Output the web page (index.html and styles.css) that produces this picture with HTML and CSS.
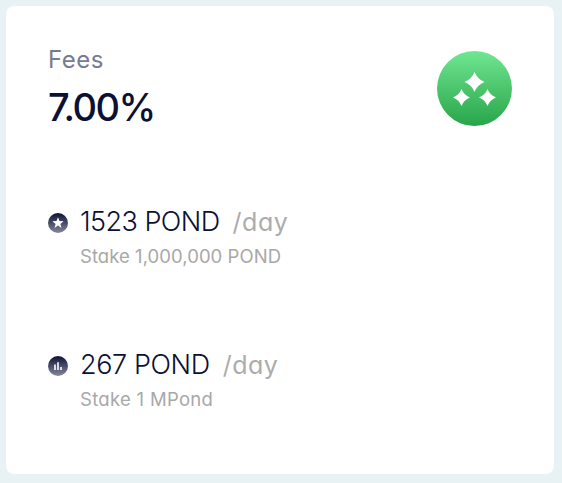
FILE: index.html
```html
<!doctype html>
<html lang="en">

    <head>
        <meta charset="UTF-8" />
        <title>Fees</title>
        <link rel="stylesheet" href="styles.css">
    </head>

    <body>
        <div class="card">
            <div class="header">
                <div class="fees">
                    <div class="label">Fees</div>
                    <div class="value">7.00%</div>
                </div>
                <svg class="badge" width="75" height="75" viewBox="0.5 0.5 75 75">
                    <defs>
                        <linearGradient id="green" x1="0" y1="0" x2="0" y2="1">
                            <stop offset="0" stop-color="#70e691" />
                            <stop offset="1" stop-color="#28a54a" />
                        </linearGradient>
                    </defs>
                    <circle cx="38" cy="38" r="37.5" fill="url(#green)" />
                    <g fill="#fff">
                        <path d="M38 21.5Q40.8 28.7 48 31.5Q40.8 34.3 38 41.5Q35.2 34.3 28 31.5Q35.2 28.7 38 21.5Z" />
                        <path d="M25 38.5Q27.4 44.7 33.5 47Q27.4 49.3 25 55.5Q22.6 49.3 16.5 47Q22.6 44.7 25 38.5Z" />
                        <path d="M51 38.5Q53.4 44.7 59.5 47Q53.4 49.3 51 55.5Q48.6 49.3 42.5 47Q48.6 44.7 51 38.5Z" />
                    </g>
                </svg>
            </div>
            <div class="reward">
                <svg class="icon" width="20" height="20" viewBox="0 0 20 20">
                    <defs>
                        <linearGradient id="navy" x1="0" y1="0" x2="0" y2="1">
                            <stop offset="0" stop-color="#0d1138" />
                            <stop offset="1" stop-color="#85889b" />
                        </linearGradient>
                    </defs>
                    <circle cx="10" cy="10" r="10" fill="url(#navy)" />
                    <path fill="#fff" d="M10 4.2L11.5 8.1L15.6 8.3L12.4 10.9L13.5 14.9L10 12.6L6.5 14.9L7.6 10.9L4.4 8.3L8.5 8.1Z" />
                </svg>
                <div>
                    <div class="amount">1523 POND<span class="day">/day</span></div>
                    <div class="stake">Stake 1,000,000 POND</div>
                </div>
            </div>
            <div class="reward mpond">
                <svg class="icon" width="20" height="20" viewBox="0 0 20 20">
                    <circle cx="10" cy="10" r="10" fill="url(#navy)" />
                    <path fill="#fff" d="M6.2 8.5h1.6v5.5h-1.6zM9.2 6.2h1.6v7.8h-1.6zM12.2 11h1.6v3h-1.6z" />
                </svg>
                <div>
                    <div class="amount">267 POND<span class="day">/day</span></div>
                    <div class="stake">Stake 1 MPond</div>
                </div>
            </div>
        </div>
    </body>

</html>
```
FILE: styles.css
```css
* {
    padding: 0px;
    margin: 0px;
    box-sizing: border-box;
}

body {
    height: 483px;
    padding: 6px 8px 9px 6px;
    background: #e8f1f4;
    font-family: Inter, "Open Sans", sans-serif;
    font-feature-settings: "cv11";
    white-space: nowrap;
}

.card {
    height: 468px;
    padding: 39px 42px 0px 42px;
    border-radius: 8px;
    background: #fff;
}

.header {
    display: flex;
    justify-content: space-between;
    height: 88px;
    margin-bottom: 71px;
}

.badge {
    margin-top: 6px;
}

.label {
    line-height: 30px;
    margin-bottom: 7px;
    font-size: 24px;
    font-weight: 400;
    letter-spacing: 0.5px;
    color: #777b90;
}

.value {
    line-height: 50px;
    font-size: 38px;
    font-weight: 500;
    letter-spacing: -1.5px;
    color: #0b1034;
}

.reward {
    display: flex;
    gap: 12px;
    height: 64px;
    margin-bottom: 79px;
}

.icon {
    margin-top: 9px;
}

.amount {
    display: flex;
    align-items: baseline;
    gap: 13px;
    line-height: 36px;
    margin-bottom: 4px;
    font-size: 27px;
    font-weight: 300;
    letter-spacing: -0.55px;
    color: #0b1034;
}

.day {
    font-size: 25px;
    font-weight: 400;
    letter-spacing: 0.5px;
    color: #acacac;
}

.stake {
    line-height: 24px;
    font-size: 18.5px;
    font-weight: 400;
    letter-spacing: 0.05px;
    color: #a8a8a8;
}

.mpond .amount {
    letter-spacing: -0.4px;
}

.mpond .day {
    letter-spacing: 0.5px;
}

.mpond .stake {
    letter-spacing: 0.3px;
}
```
